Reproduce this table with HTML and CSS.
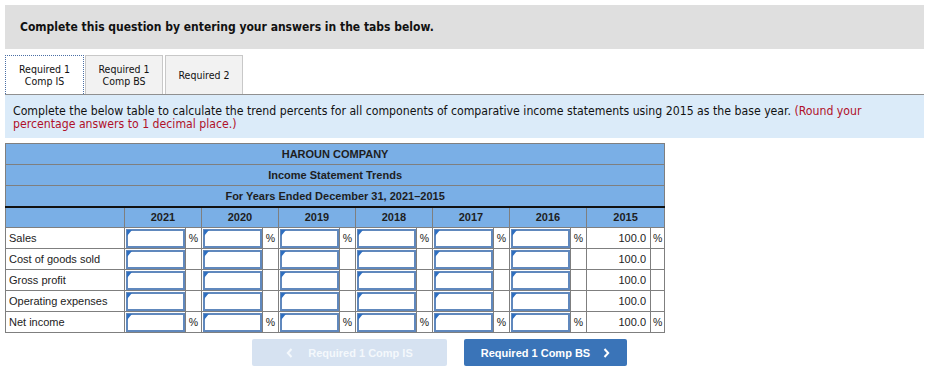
FILE: index.html
```html
<!DOCTYPE html>
<html>
<head>
<meta charset="utf-8">
<link rel="stylesheet" href="styles.css">
</head>
<body>
<div class="page">
  <div class="header">Complete this question by entering your answers in the tabs below.</div>
  <div class="tabs">
    <div class="tab tab-active">Required 1<br>Comp IS</div>
    <div class="tab tab-2">Required 1<br>Comp BS</div>
    <div class="tab tab-3">Required 2</div>
  </div>
  <div class="info">Complete the below table to calculate the trend percents for all components of comparative income statements using 2015 as the base year. <span class="red">(Round your percentage answers to 1 decimal place.)</span></div>

  <table class="grid">
    <colgroup>
      <col class="c-label">
      <col class="c-in"><col class="c-pct">
      <col class="c-in"><col class="c-pct">
      <col class="c-in"><col class="c-pct">
      <col class="c-in"><col class="c-pct">
      <col class="c-in"><col class="c-pct">
      <col class="c-in"><col class="c-pct">
      <col class="c-val"><col class="c-pct2">
    </colgroup>
    <tr class="hrow"><th colspan="15">HAROUN COMPANY</th></tr>
    <tr class="hrow"><th colspan="15">Income Statement Trends</th></tr>
    <tr class="hrow hlast"><th colspan="15">For Years Ended December 31, 2021–2015</th></tr>
    <tr class="yrow">
      <th></th>
      <th colspan="2">2021</th><th colspan="2">2020</th><th colspan="2">2019</th>
      <th colspan="2">2018</th><th colspan="2">2017</th><th colspan="2">2016</th>
      <th colspan="2">2015</th>
    </tr>
    <tr>
      <td class="lab">Sales</td>
      <td class="in"><div class="box"></div></td><td class="pct">%</td>
      <td class="in"><div class="box"></div></td><td class="pct">%</td>
      <td class="in"><div class="box"></div></td><td class="pct">%</td>
      <td class="in"><div class="box"></div></td><td class="pct">%</td>
      <td class="in"><div class="box"></div></td><td class="pct">%</td>
      <td class="in"><div class="box"></div></td><td class="pct">%</td>
      <td class="val">100.0</td><td class="pct">%</td>
    </tr>
    <tr>
      <td class="lab">Cost of goods sold</td>
      <td class="in"><div class="box"></div></td><td class="pct"></td>
      <td class="in"><div class="box"></div></td><td class="pct"></td>
      <td class="in"><div class="box"></div></td><td class="pct"></td>
      <td class="in"><div class="box"></div></td><td class="pct"></td>
      <td class="in"><div class="box"></div></td><td class="pct"></td>
      <td class="in"><div class="box"></div></td><td class="pct"></td>
      <td class="val">100.0</td><td class="pct"></td>
    </tr>
    <tr>
      <td class="lab">Gross profit</td>
      <td class="in"><div class="box"></div></td><td class="pct"></td>
      <td class="in"><div class="box"></div></td><td class="pct"></td>
      <td class="in"><div class="box"></div></td><td class="pct"></td>
      <td class="in"><div class="box"></div></td><td class="pct"></td>
      <td class="in"><div class="box"></div></td><td class="pct"></td>
      <td class="in"><div class="box"></div></td><td class="pct"></td>
      <td class="val">100.0</td><td class="pct"></td>
    </tr>
    <tr>
      <td class="lab">Operating expenses</td>
      <td class="in"><div class="box"></div></td><td class="pct"></td>
      <td class="in"><div class="box"></div></td><td class="pct"></td>
      <td class="in"><div class="box"></div></td><td class="pct"></td>
      <td class="in"><div class="box"></div></td><td class="pct"></td>
      <td class="in"><div class="box"></div></td><td class="pct"></td>
      <td class="in"><div class="box"></div></td><td class="pct"></td>
      <td class="val">100.0</td><td class="pct"></td>
    </tr>
    <tr>
      <td class="lab">Net income</td>
      <td class="in"><div class="box"></div></td><td class="pct">%</td>
      <td class="in"><div class="box"></div></td><td class="pct">%</td>
      <td class="in"><div class="box"></div></td><td class="pct">%</td>
      <td class="in"><div class="box"></div></td><td class="pct">%</td>
      <td class="in"><div class="box"></div></td><td class="pct">%</td>
      <td class="in"><div class="box"></div></td><td class="pct">%</td>
      <td class="val">100.0</td><td class="pct">%</td>
    </tr>
  </table>

  <div class="nav">
    <div class="btn btn-off">
      <svg class="chev" width="7" height="10" viewBox="0 0 7 10"><path d="M5.5 1 L1.8 5 L5.5 9" fill="none" stroke="currentColor" stroke-width="2"/></svg>
      <span>Required 1 Comp IS</span>
    </div>
    <div class="btn btn-on">
      <span>Required 1 Comp BS</span>
      <svg class="chev chev-r" width="7" height="10" viewBox="0 0 7 10"><path d="M1.5 1 L5.2 5 L1.5 9" fill="none" stroke="currentColor" stroke-width="2"/></svg>
    </div>
  </div>
</div>
</body>
</html>
```

FILE: styles.css
```css
html, body {
  margin: 0;
  padding: 0;
  background: #ffffff;
}

.page {
  padding: 5px 0 0 5px;
  width: 919px;
  font-family: "DejaVu Sans Condensed", "DejaVu Sans", sans-serif;
  color: #111;
}

.header {
  height: 44px;
  background: #dfdfdf;
  display: flex;
  align-items: center;
  padding-left: 15px;
  font-weight: bold;
  font-size: 12px;
  color: #111;
}

.tabs {
  display: flex;
  margin-top: 6px;
  height: 39px;
  align-items: stretch;
}

.tab {
  box-sizing: border-box;
  display: flex;
  align-items: center;
  justify-content: center;
  text-align: center;
  font-size: 10.5px;
  line-height: 12px;
  color: #111;
  background: #f2f2f2;
  border: 1px solid #c8c8c8;
  border-bottom: none;
}

.tab-active {
  width: 79px;
  background: #ffffff;
  border: 1px dotted #4a6fa5;
  border-bottom: none;
}

.tab-2 {
  width: 78px;
  margin-left: 1px;
}

.tab-3 {
  width: 78px;
  margin-left: 2px;
}

.info {
  box-sizing: border-box;
  height: 44px;
  background: #dbebf9;
  border-top: 1px solid #909090;
  padding: 10px 50px 0 8px;
  font-size: 12.2px;
  line-height: 13px;
  color: #111;
}

.red {
  color: #b01029;
}

.grid {
  margin-top: 5px;
  border-collapse: collapse;
  table-layout: fixed;
  width: 659px;
  font-family: "Liberation Sans", Arial, sans-serif;
  font-size: 11px;
  color: #222;
}

.c-label { width: 119px; }
.c-in { width: 61px; }
.c-pct { width: 16px; }
.c-val { width: 64px; }
.c-pct2 { width: 14px; }

.grid th, .grid td {
  border: 1px solid #7f7f7f;
  height: 21px;
  padding: 0;
  box-sizing: border-box;
}

.grid th {
  background: #7aafe6;
  font-weight: bold;
  text-align: center;
  color: #1e1e1e;
}

.hlast th {
  border-bottom: 2px solid #111;
}

.grid td.lab {
  padding-left: 3px;
  text-align: left;
  white-space: nowrap;
}

.grid td.in {
  padding: 1px 0 0 1px;
}

.box {
  box-sizing: border-box;
  height: 19px;
  border: 2px solid #6088bd;
  background: #fff;
  position: relative;
}

.box::before {
  content: "";
  position: absolute;
  left: -1px;
  top: -1px;
  width: 0;
  height: 0;
  border-top: 6px solid #2f6fc0;
  border-right: 5px solid transparent;
}

.grid td.pct {
  text-align: center;
  font-size: 10.5px;
}

.grid td.val {
  text-align: right;
  padding-right: 4px;
  font-size: 11px;
}

.nav {
  display: flex;
  margin-top: 6px;
  margin-left: 247px;
  gap: 17px;
}

.btn {
  box-sizing: border-box;
  height: 27px;
  border-radius: 2px;
  display: flex;
  align-items: center;
  justify-content: center;
  font-family: "Liberation Sans", Arial, sans-serif;
  font-weight: bold;
  font-size: 11px;
  color: #ffffff;
}

.btn-off {
  width: 195px;
  background: #d6e2f1;
  color: #f4f8fc;
  gap: 15px;
}

.btn-on {
  width: 163px;
  background: #3a74b8;
  gap: 13px;
}

.chev {
  display: block;
}
```
